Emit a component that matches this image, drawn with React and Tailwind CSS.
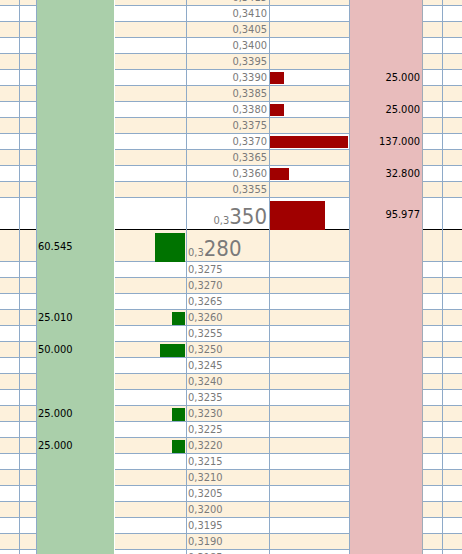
import React from 'react';

// price ladder: bids on the left (green), asks on the right (red)
const upper = [3415, 3410, 3405, 3400, 3395, 3390, 3385, 3380, 3375, 3370, 3365, 3360, 3355];
const lower = [3275, 3270, 3265, 3260, 3255, 3250, 3245, 3240, 3235, 3230, 3225, 3220, 3215, 3210, 3205, 3200, 3195, 3190, 3185];

const asks = { 3390: 25000, 3380: 25000, 3370: 137000, 3360: 32800, 3350: 95977 };
const bids = { 3280: 60545, 3260: 25010, 3250: 50000, 3230: 25000, 3220: 25000 };

const ASK_SCALE = 78 / 137000;
const BID_SCALE = 0.0005;

const fmtQty = (n) => n.toLocaleString('de-DE');

const line = 'border-r border-[#8eaac8]';

function Row({ price, cream, tall, divider, left }) {
  const bg = cream ? 'bg-[#fdf1dc]' : 'bg-white';
  const bid = bids[price];
  const ask = asks[price];
  const priceText = String(price);

  return (
    <div
      className={`grid grid-cols-[20px_17px_78px_72px_83px_80px_73px_20px_1fr] border-b ${
        divider ? 'border-black' : 'border-[#8eaac8]'
      } ${tall ? 'h-[32px]' : 'h-[16px]'} ${bg}`}
    >
      <div className={line} />
      <div className={line} />
      <div className="flex items-center border-r border-white bg-[#aacfaa] pl-[1px] text-black">
        {bid ? fmtQty(bid) : null}
      </div>
      <div className={`${line} flex items-center justify-end pr-[1px]`}>
        {bid ? (
          <div
            className={`bg-[#007300] ${tall ? 'h-[29px]' : 'h-[13px]'}`}
            style={{ width: Math.round(bid * BID_SCALE) }}
          />
        ) : null}
      </div>
      <div
        className={`${line} flex items-center text-[#7a7a7a] ${
          left ? 'justify-start pl-[1px]' : 'justify-end pr-[2px]'
        }`}
      >
        {tall ? (
          <span className="pt-[2px]">
            <span className="text-[11px]">0,{priceText.slice(0, 1)}</span>
            <span className="text-[22px]">{priceText.slice(1)}</span>
          </span>
        ) : (
          `0,${priceText}`
        )}
      </div>
      <div className={`${line} flex items-center`}>
        {ask ? (
          <div
            className={`bg-[#a00000] ${tall ? 'h-[29px]' : 'h-[12px]'}`}
            style={{ width: Math.round(ask * ASK_SCALE) }}
          />
        ) : null}
      </div>
      <div className="flex items-center justify-end border-r border-[#9fabb8] bg-[#e8bcbc] pr-[2px] text-black">
        {ask ? fmtQty(ask) : null}
      </div>
      <div className={line} />
      <div />
    </div>
  );
}

export default function App() {
  return (
    <div className="h-[554px] w-[462px] overflow-hidden bg-white font-['DejaVu_Sans_Condensed','Liberation_Sans',sans-serif] text-[11px]">
      <div className="-mt-[10px]">
        {upper.map((p, i) => (
          <Row key={p} price={p} cream={i % 2 === 0} />
        ))}
        <Row price={3350} tall divider />
        <Row price={3280} tall cream left />
        {lower.map((p, i) => (
          <Row key={p} price={p} cream={i % 2 === 1} left />
        ))}
      </div>
    </div>
  );
}
